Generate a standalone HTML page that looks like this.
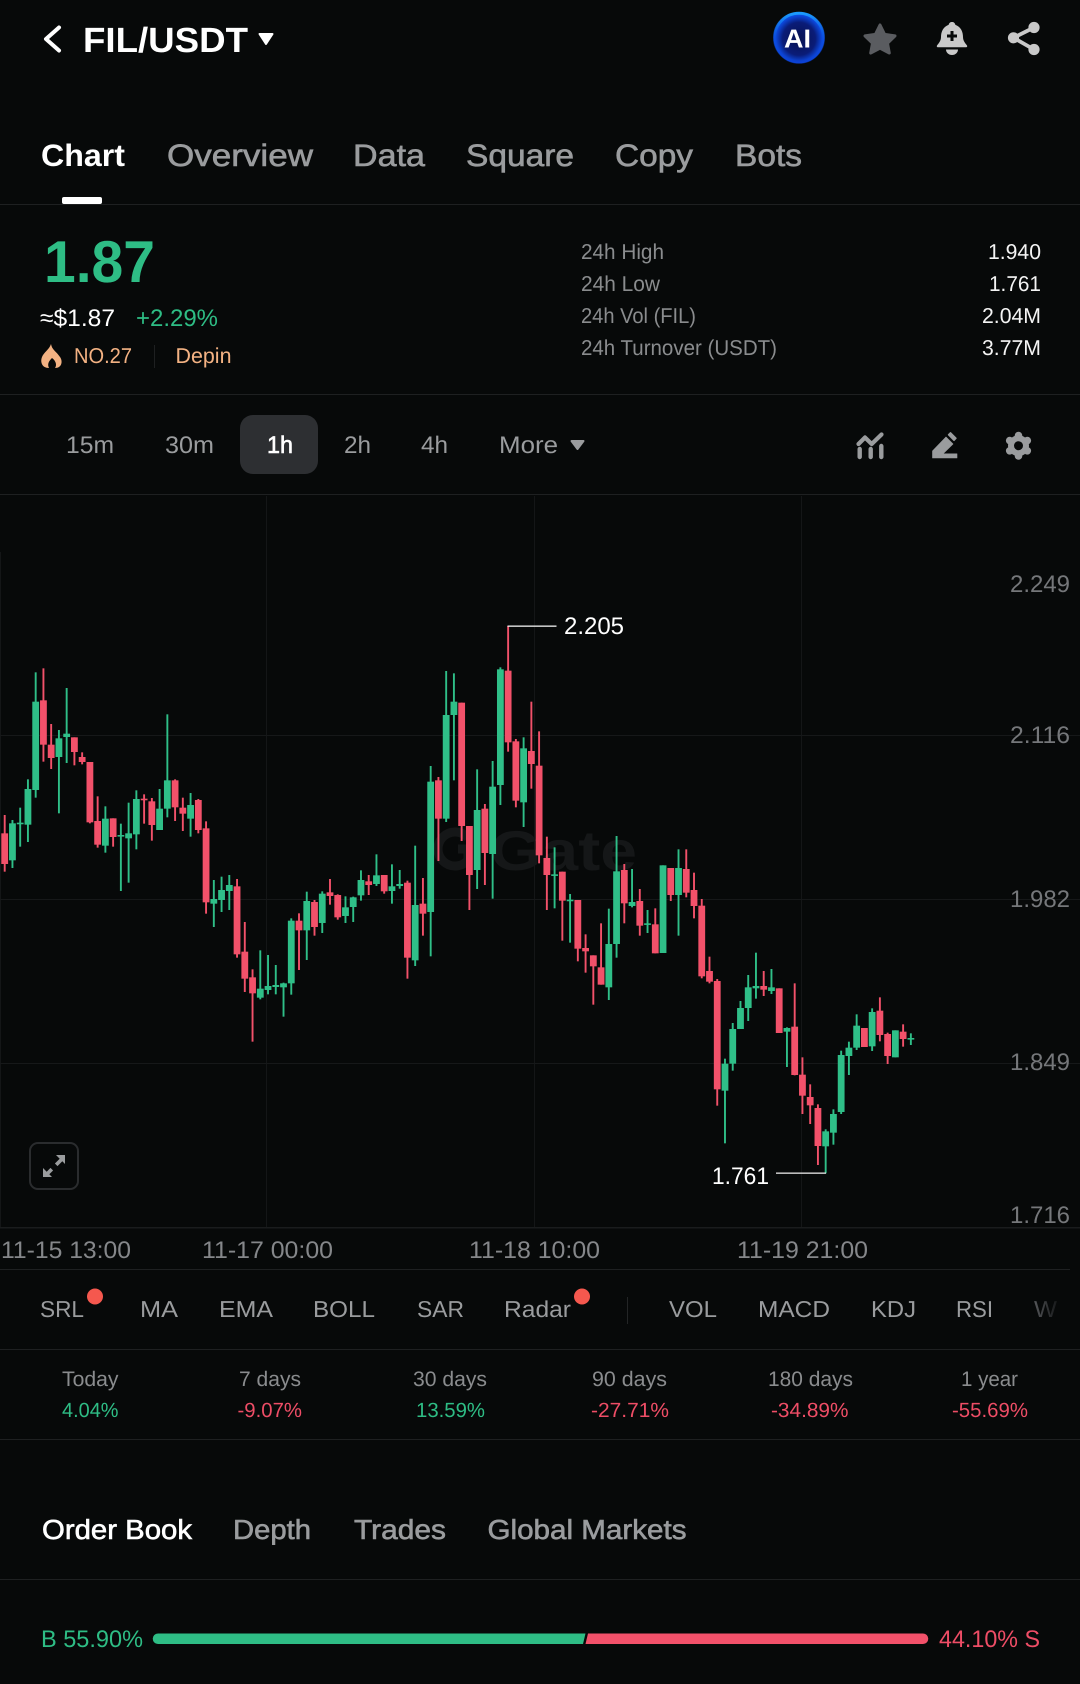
<!DOCTYPE html>
<html lang="en">
<head>
<meta charset="utf-8">
<title>FIL/USDT</title>
<style>
html,body{margin:0;padding:0;background:#070909;}
svg{display:block;}
text{font-family:"Liberation Sans",sans-serif;text-rendering:geometricPrecision;}
.w{fill:#fff}
.g{fill:#9a9c9e}
.s{fill:#8a8c8e;font-size:21.5px}
.v{fill:#f4f4f4;font-size:21.5px}
.a{fill:#75777a;font-size:24px}
.d{fill:#85878a;font-size:24px}
.i{fill:#9a9c9e;font-size:23px}
.t{fill:#8a8c8e;font-size:21px}
.up{fill:#2ebd85}
.dn{fill:#ee4d66}
.or{fill:#f3b283;font-size:21.5px}
.m{stroke-width:.6px}
.tab{font-size:31px;fill:#9a9c9e;stroke:#9a9c9e}
.ob{font-size:27.5px;fill:#9a9c9e;stroke:#9a9c9e}
.tf{font-size:24px;fill:#9a9c9e}
</style>
</head>
<body>
<svg id="page" xmlns="http://www.w3.org/2000/svg" width="1080" height="1684" viewBox="0 0 1080 1684">
<defs>
<radialGradient id="aig" cx="50%" cy="52%" r="52%">
<stop offset="0" stop-color="#071250"/>
<stop offset=".62" stop-color="#0a1c78"/>
<stop offset=".86" stop-color="#0c46d8"/>
<stop offset="1" stop-color="#0d5cf0"/>
</radialGradient>
<linearGradient id="aiw" x1="0" y1="0" x2="0" y2="1">
<stop offset="0" stop-color="#1b9bff"/>
<stop offset=".5" stop-color="#0b4fe0" stop-opacity=".5"/>
<stop offset="1" stop-color="#0b3cd0" stop-opacity=".6"/>
</linearGradient>
<linearGradient id="fadeW" x1="0" y1="0" x2="1" y2="0">
<stop offset="0" stop-color="#55575a"/>
<stop offset="1" stop-color="#17191a"/>
</linearGradient>
</defs>
<rect width="1080" height="1684" fill="#070909"/>

<!-- header -->
<path d="M59 27.5 L46 39 L59 50.5" fill="none" stroke="#fff" stroke-width="4" stroke-linecap="round" stroke-linejoin="round"/>
<text x="83" y="52" class="w" font-size="35" font-weight="700" textLength="165" lengthAdjust="spacingAndGlyphs">FIL/USDT</text>
<path d="M259.5 34 H272.5 L266 44 Z" fill="#fff" stroke="#fff" stroke-width="2" stroke-linejoin="round"/>

<circle cx="799" cy="37.8" r="25.5" fill="url(#aig)"/>
<circle cx="799" cy="37.8" r="24.5" fill="none" stroke="url(#aiw)" stroke-width="3"/>
<text x="784" y="47.5" class="w" font-size="26" font-weight="700" textLength="27" lengthAdjust="spacingAndGlyphs">AI</text>

<path d="M880 25 L884.6 34.4 L895 35.9 L887.5 43.2 L889.3 53 L880 48.2 L870.7 53 L872.5 43.2 L865 35.9 L875.4 34.4 Z" fill="#5a5c60" stroke="#5a5c60" stroke-width="3" stroke-linejoin="round"/>

<path d="M952 22 c1.7 0 3 1 3.3 2.8 C961 27 963 32 963 37 c0 3.5 2 6 4 8.5 c.5 .7 .2 1.8 -1 1.8 H938 c-1.2 0 -1.5 -1.1 -1 -1.8 c2 -2.5 4 -5 4 -8.5 c0 -5 2 -10 7.7 -12.2 C949 23 950.3 22 952 22 z" fill="#c9c9c9"/>
<path d="M946 49.5 h12 c0 3 -2.5 5.5 -6 5.5 s-6 -2.5 -6 -5.5z" fill="#c9c9c9"/>
<path d="M952 31 v10 M947 36 h10" stroke="#070909" stroke-width="3" fill="none"/>

<path d="M1034 27.5 L1013.5 37.8 L1034 49.5" fill="none" stroke="#c9c9c9" stroke-width="3.8"/>
<circle cx="1034" cy="27.5" r="5.6" fill="#c9c9c9"/>
<circle cx="1013.5" cy="37.8" r="5.6" fill="#c9c9c9"/>
<circle cx="1034" cy="49.5" r="5.6" fill="#c9c9c9"/>

<!-- tabs -->
<text x="41" y="166" class="w" font-size="31" font-weight="700" textLength="84" lengthAdjust="spacingAndGlyphs">Chart</text>
<text x="167" y="166" class="tab m" textLength="146" lengthAdjust="spacingAndGlyphs">Overview</text>
<text x="353" y="166" class="tab m" textLength="72" lengthAdjust="spacingAndGlyphs">Data</text>
<text x="466" y="166" class="tab m" textLength="108" lengthAdjust="spacingAndGlyphs">Square</text>
<text x="615" y="166" class="tab m" textLength="78" lengthAdjust="spacingAndGlyphs">Copy</text>
<text x="735" y="166" class="tab m" textLength="67" lengthAdjust="spacingAndGlyphs">Bots</text>
<rect x="0" y="204" width="1080" height="1" fill="#1e2021"/>
<rect x="62" y="197" width="40" height="7" rx="2" fill="#fff"/>

<!-- price block -->
<text x="44" y="282" class="up" font-size="59" font-weight="700" textLength="111" lengthAdjust="spacingAndGlyphs">1.87</text>
<text x="40" y="326" class="w" font-size="24" textLength="75" lengthAdjust="spacingAndGlyphs">≈$1.87</text>
<text x="136" y="326" class="up" font-size="24" textLength="82" lengthAdjust="spacingAndGlyphs">+2.29%</text>
<path d="M51 344 C52 350 56 351 60 357 C63 361 62 368 55 368 C57 365 56 361 52 358 C49 361 47 364 49 368 C42 368 40 362 42 357 C44 352 49 350 51 344z" fill="#f3b283"/>
<text x="74" y="363" class="or" textLength="58" lengthAdjust="spacingAndGlyphs">NO.27</text>
<rect x="154" y="345" width="1" height="23" fill="#1e2021"/>
<text x="175.500" y="363" class="or" textLength="56" lengthAdjust="spacingAndGlyphs">Depin</text>

<text x="581" y="259" class="s" textLength="83" lengthAdjust="spacingAndGlyphs">24h High</text>
<text x="581" y="291" class="s" textLength="79" lengthAdjust="spacingAndGlyphs">24h Low</text>
<text x="581" y="323" class="s" textLength="115" lengthAdjust="spacingAndGlyphs">24h Vol (FIL)</text>
<text x="581" y="355" class="s" textLength="196" lengthAdjust="spacingAndGlyphs">24h Turnover (USDT)</text>
<text x="988" y="259" class="v" textLength="53" lengthAdjust="spacingAndGlyphs">1.940</text>
<text x="989" y="291" class="v" textLength="52" lengthAdjust="spacingAndGlyphs">1.761</text>
<text x="982" y="323" class="v" textLength="59" lengthAdjust="spacingAndGlyphs">2.04M</text>
<text x="982" y="355" class="v" textLength="59" lengthAdjust="spacingAndGlyphs">3.77M</text>
<rect x="0" y="394" width="1080" height="1" fill="#1e2021"/>

<!-- timeframe -->
<rect x="240" y="415" width="78" height="59" rx="13" fill="#2d2f32"/>
<text x="66" y="453" class="tf" textLength="48" lengthAdjust="spacingAndGlyphs">15m</text>
<text x="165" y="453" class="tf" textLength="49" lengthAdjust="spacingAndGlyphs">30m</text>
<text x="267" y="453" class="w" font-size="24" stroke="#fff" stroke-width=".6" textLength="26" lengthAdjust="spacingAndGlyphs">1h</text>
<text x="344" y="453" class="tf" textLength="27" lengthAdjust="spacingAndGlyphs">2h</text>
<text x="421" y="453" class="tf" textLength="27" lengthAdjust="spacingAndGlyphs">4h</text>
<text x="499" y="453" class="tf" textLength="59" lengthAdjust="spacingAndGlyphs">More</text>
<path d="M571.500 441 H583.500 L577.500 449 Z" fill="#9a9c9e" stroke="#9a9c9e" stroke-width="2" stroke-linejoin="round"/>

<path d="M859.700 449 v8 M870.700 449 v8 M881.300 446 v11" stroke="#9a9c9e" stroke-width="4.400" stroke-linecap="round" fill="none"/>
<path d="M858.500 444 L865 437.500 L871.700 444 L881.500 434.500" stroke="#9a9c9e" stroke-width="4.200" stroke-linecap="round" stroke-linejoin="round" fill="none"/>

<path d="M932.500 451 L946 437 L953 444 L943 453.800 H957 V458 H932.500 Z" fill="#9a9c9e" stroke="#9a9c9e" stroke-width=".6" stroke-linejoin="round"/>
<path d="M948.500 434.800 L950.500 432.800 L956 438.300 L954 440.400 Z" fill="#9a9c9e" stroke="#9a9c9e" stroke-width="1.400" stroke-linejoin="round"/>

<g fill="#9a9c9e">
<circle cx="1018.500" cy="445.700" r="10.500"/>
<circle cx="1018.500" cy="435.500" r="3.800"/>
<circle cx="1018.500" cy="455.900" r="3.800"/>
<circle cx="1009.700" cy="440.600" r="3.800"/>
<circle cx="1027.300" cy="440.600" r="3.800"/>
<circle cx="1009.700" cy="450.800" r="3.800"/>
<circle cx="1027.300" cy="450.800" r="3.800"/>
</g>
<circle cx="1018.500" cy="445.700" r="4.500" fill="#070909"/>
<rect x="0" y="494" width="1080" height="1" fill="#1e2021"/>

<!-- grid -->
<g fill="#141617">
<rect x="266" y="496" width="1" height="732"/>
<rect x="534" y="496" width="1" height="732"/>
<rect x="801" y="496" width="1" height="732"/>
<rect x="0" y="552" width="1" height="676"/>
</g>
<g fill="#161819">
<rect x="0" y="735" width="1080" height="1"/>
<rect x="0" y="899" width="1080" height="1"/>
<rect x="0" y="1063" width="1080" height="1"/>
</g>
<rect x="0" y="1227" width="1080" height="1.500" fill="#1a1c1d"/>

<!-- watermark -->
<path d="M468 838 A17 17 0 1 0 468 860 L468 849 H458" fill="none" stroke="#151718" stroke-width="9"/>
<text x="490" y="870" fill="#151718" font-size="56" font-weight="700" textLength="147" lengthAdjust="spacingAndGlyphs">Gate</text>

<g id="candles"></g>

<!-- chart labels -->
<text x="1010" y="592" class="a" textLength="60" lengthAdjust="spacingAndGlyphs">2.249</text>
<text x="1010" y="743" class="a" textLength="60" lengthAdjust="spacingAndGlyphs">2.116</text>
<text x="1010" y="907" class="a" textLength="60" lengthAdjust="spacingAndGlyphs">1.982</text>
<text x="1010" y="1070" class="a" textLength="60" lengthAdjust="spacingAndGlyphs">1.849</text>
<text x="1010" y="1223" class="a" textLength="60" lengthAdjust="spacingAndGlyphs">1.716</text>

<rect x="507.500" y="625.500" width="49" height="1.300" fill="#f2f2f2"/>
<text x="564" y="634" class="w" font-size="24" textLength="60" lengthAdjust="spacingAndGlyphs">2.205</text>
<rect x="776" y="1172.500" width="50" height="1.300" fill="#e8e8e8"/>
<text x="712" y="1184" class="w" font-size="24" textLength="57" lengthAdjust="spacingAndGlyphs">1.761</text>

<!-- expand -->
<rect x="30" y="1143" width="48" height="46" rx="8" fill="#070909" stroke="#2a2c2e" stroke-width="2"/>
<path d="M56 1155 H65 V1164 L62.300 1161.300 L57.500 1166.100 L54.900 1163.500 L59.700 1158.700 Z" fill="#9a9c9e"/>
<path d="M43 1168 V1177 H52 L49.300 1174.300 L53.100 1170.500 L50.500 1167.900 L46.700 1171.700 Z" fill="#9a9c9e"/>

<!-- date axis -->
<text x="1" y="1258" class="d" textLength="130" lengthAdjust="spacingAndGlyphs">11-15 13:00</text>
<text x="202" y="1258" class="d" textLength="131" lengthAdjust="spacingAndGlyphs">11-17 00:00</text>
<text x="469" y="1258" class="d" textLength="131" lengthAdjust="spacingAndGlyphs">11-18 10:00</text>
<text x="737" y="1258" class="d" textLength="131" lengthAdjust="spacingAndGlyphs">11-19 21:00</text>
<rect x="0" y="1269" width="1070" height="1" fill="#1e2021"/>

<!-- indicators -->
<text x="40" y="1317" class="i" textLength="44" lengthAdjust="spacingAndGlyphs">SRL</text>
<circle cx="95" cy="1296.500" r="8" fill="#f5584e"/>
<text x="140" y="1317" class="i" textLength="38" lengthAdjust="spacingAndGlyphs">MA</text>
<text x="219" y="1317" class="i" textLength="54" lengthAdjust="spacingAndGlyphs">EMA</text>
<text x="313" y="1317" class="i" textLength="62" lengthAdjust="spacingAndGlyphs">BOLL</text>
<text x="417" y="1317" class="i" textLength="47" lengthAdjust="spacingAndGlyphs">SAR</text>
<text x="504" y="1317" class="i" textLength="67" lengthAdjust="spacingAndGlyphs">Radar</text>
<circle cx="582" cy="1296.500" r="8" fill="#f5584e"/>
<rect x="627" y="1297" width="1" height="27" fill="#232526"/>
<text x="669" y="1317" class="i" textLength="48" lengthAdjust="spacingAndGlyphs">VOL</text>
<text x="758" y="1317" class="i" textLength="72" lengthAdjust="spacingAndGlyphs">MACD</text>
<text x="871" y="1317" class="i" textLength="45" lengthAdjust="spacingAndGlyphs">KDJ</text>
<text x="956" y="1317" class="i" textLength="37" lengthAdjust="spacingAndGlyphs">RSI</text>
<text x="1034" y="1317" font-size="23" fill="url(#fadeW)" textLength="23" lengthAdjust="spacingAndGlyphs">W</text>
<rect x="0" y="1349" width="1080" height="1" fill="#1e2021"/>

<!-- stats -->
<text x="62" y="1386" class="t" textLength="56.500" lengthAdjust="spacingAndGlyphs">Today</text>
<text x="239" y="1386" class="t" textLength="62" lengthAdjust="spacingAndGlyphs">7 days</text>
<text x="413" y="1386" class="t" textLength="74" lengthAdjust="spacingAndGlyphs">30 days</text>
<text x="592" y="1386" class="t" textLength="75" lengthAdjust="spacingAndGlyphs">90 days</text>
<text x="768" y="1386" class="t" textLength="85" lengthAdjust="spacingAndGlyphs">180 days</text>
<text x="961" y="1386" class="t" textLength="57" lengthAdjust="spacingAndGlyphs">1 year</text>
<g font-size="20.500">
<text x="62" y="1417" class="up" textLength="56.500" lengthAdjust="spacingAndGlyphs">4.04%</text>
<text x="237.500" y="1417" class="dn" textLength="64.500" lengthAdjust="spacingAndGlyphs">-9.07%</text>
<text x="416" y="1417" class="up" textLength="69" lengthAdjust="spacingAndGlyphs">13.59%</text>
<text x="591" y="1417" class="dn" textLength="78" lengthAdjust="spacingAndGlyphs">-27.71%</text>
<text x="771" y="1417" class="dn" textLength="77.500" lengthAdjust="spacingAndGlyphs">-34.89%</text>
<text x="952" y="1417" class="dn" textLength="76" lengthAdjust="spacingAndGlyphs">-55.69%</text>
</g>
<rect x="0" y="1439" width="1080" height="1" fill="#1e2021"/>

<!-- order book -->
<text x="42" y="1539" class="w" font-size="27.500" stroke="#fff" stroke-width=".6" textLength="150" lengthAdjust="spacingAndGlyphs">Order Book</text>
<text x="233" y="1539" class="ob m" textLength="78" lengthAdjust="spacingAndGlyphs">Depth</text>
<text x="354" y="1539" class="ob m" textLength="92" lengthAdjust="spacingAndGlyphs">Trades</text>
<text x="487.500" y="1539" class="ob m" textLength="199" lengthAdjust="spacingAndGlyphs">Global Markets</text>
<rect x="0" y="1579" width="1080" height="1" fill="#1e2021"/>

<text x="41" y="1647" class="up" font-size="24" textLength="102" lengthAdjust="spacingAndGlyphs">B 55.90%</text>
<path d="M158 1633.500 H585.500 L583 1644 H158 A5.250 5.250 0 0 1 158 1633.500 Z" fill="#2ebd85"/>
<path d="M588 1633.500 H923 A5.250 5.250 0 0 1 923 1644 H585.500 Z" fill="#f2516a"/>
<text x="939" y="1647" class="dn" font-size="24" textLength="101" lengthAdjust="spacingAndGlyphs">44.10% S</text>
</svg>
<script>
(function(){
var D=[
[0,495,550,642,665],[1,510,520,631,654],[1,473,518,522,590],[1,388,417,524,576],[1,67,155,420,443],
[0,55,151,284,335],[0,222,284,324,357],[1,240,265,321,490],[1,114,251,261,339],[0,262,262,306,346],
[0,307,321,336,343],[0,336,336,517,520],[0,439,513,584,593],[1,469,506,587,608],[0,505,505,561,590],
[1,521,555,559,723],[1,458,550,565,698],[1,421,447,553,598],[0,433,446,450,521],[0,444,454,525,572],
[1,417,476,540,540],[1,193,391,476,502],[0,388,391,472,513],[0,443,473,491,543],[1,429,465,506,560],
[0,447,450,540,550],[0,514,535,757,791],[1,690,747,761,831],[1,680,720,750,786],[1,675,705,723,780],
[0,687,709,913,923],[0,816,905,986,1026],[0,958,982,1030,1175],[1,901,1016,1043,1048],[1,915,1008,1020,1033],
[1,945,1005,1011,1033],[1,998,1000,1012,1100],[1,805,812,1000,1034],[0,790,812,841,960],[1,725,753,841,930],
[0,750,756,831,857],[1,724,731,819,849],[0,687,727,738,764],[0,733,735,802,809],[1,739,772,798,819],
[1,740,742,771,816],[1,661,690,736,752],[0,675,694,705,735],[1,613,676,702,708],[0,675,675,724,731],
[1,643,709,723,761],[1,660,702,708,716],[0,692,698,923,986],[1,587,765,931,948],[0,684,761,791,857],
[1,348,395,786,919],[0,381,391,506,633],[1,63,195,506,516],[1,70,155,195,391],[0,158,158,528,573],
[0,528,528,675,780],[1,358,480,660,717],[0,462,476,609,705],[1,333,410,612,746],[1,52,58,405,465],
[0,-72,62,277,305],[0,267,274,452,472],[1,262,295,457,531],[0,155,303,342,416],[0,244,347,616,640],
[0,560,624,675,780],[1,592,673,677,775],[0,665,665,752,872],[1,732,749,753,878],[0,750,750,896,934],
[0,853,894,904,968],[0,916,916,949,1064],[0,820,952,1004,1004],[1,776,882,1012,1050],[1,558,664,882,923],
[0,642,660,760,820],[1,657,756,768,772],[0,717,753,827,857],[1,780,820,824,849],[0,775,823,910,910],
[1,646,646,909,909],[0,654,654,735,753],[1,598,654,735,857],[0,598,657,728,742],[0,668,720,768,805],
[0,747,767,979,985],[0,920,963,995,1000],[0,987,993,1318,1367],[1,1226,1241,1322,1480],[1,1119,1137,1241,1262],
[1,1053,1074,1137,1137],[1,975,1012,1074,1113],[1,908,1008,1015,1046],[0,963,1008,1019,1038],[1,957,1012,1023,1032],
[0,1015,1015,1149,1149],[1,1132,1134,1145,1251],[0,1000,1130,1275,1276],[0,1222,1274,1337,1392],[0,1303,1341,1366,1422],
[0,1363,1374,1488,1545],[1,1438,1444,1489,1570],[1,1378,1392,1448,1484],[1,1202,1215,1386,1392],[1,1175,1193,1218,1275],
[1,1093,1127,1193,1200],[0,1134,1134,1191,1191],[1,1075,1086,1189,1203],[0,1042,1082,1155,1174],[0,1148,1152,1218,1242],
[1,1141,1141,1222,1222],[0,1123,1145,1167,1190],[1,1150,1164,1168,1185]
];
var NS="http://www.w3.org/2000/svg",g=document.getElementById("candles");
function r(x,y,w,h,f){var e=document.createElementNS(NS,"rect");e.setAttribute("x",x.toFixed(2));e.setAttribute("y",y.toFixed(2));e.setAttribute("width",w);e.setAttribute("height",h.toFixed(2));e.setAttribute("fill",f);g.appendChild(e);}
D.forEach(function(c,i){
 var x=4.7+7.745*i,f=c[0]?"#2fbf88":"#f2516a";
 var Y=function(v){return 650+v/3;};
 r(x-.95,Y(c[1]),1.9,(c[4]-c[1])/3,f);
 r(x-3.4,Y(c[2]),6.8,Math.max((c[3]-c[2])/3,1.6),f);
});
})();
</script>
</body>
</html>
